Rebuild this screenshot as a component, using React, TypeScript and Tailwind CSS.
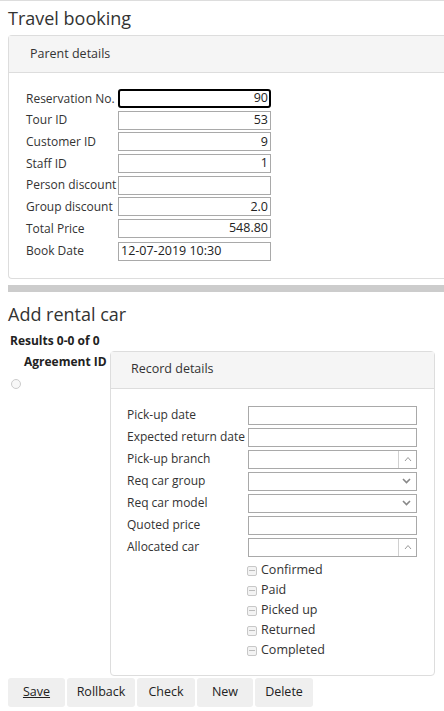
import React from "react";

const font = { fontFamily: '"Open Sans", "Noto Sans", sans-serif' };

function NumInput({ value, focus }: { value: string; focus?: boolean }) {
  return (
    <div
      className={
        focus
          ? "w-[153px] h-[19px] border-2 border-black rounded-[3px] flex items-center justify-end pr-[1px] text-[12.5px] text-[#222]"
          : "w-[153px] h-[19px] border border-[#a9a9a9] flex items-center justify-end pr-[2px] text-[12.5px] text-[#222]"
      }
    >
      {value}
    </div>
  );
}

function Row({ label, children }: { label: string; children: React.ReactNode }) {
  return (
    <div className="flex items-center h-[19px]">
      <div className="w-[92px] text-[12px] text-[#333] whitespace-nowrap">{label}</div>
      {children}
    </div>
  );
}

function Row2({ label, children }: { label: string; children: React.ReactNode }) {
  return (
    <div className="flex items-center h-[19px]">
      <div className="w-[121px] text-[12px] text-[#333] whitespace-nowrap">{label}</div>
      {children}
    </div>
  );
}

function TextBox() {
  return <div className="w-[169px] h-[19px] border border-[#a9a9a9]" />;
}

function LookupBox() {
  return (
    <div className="w-[169px] h-[19px] border border-[#a9a9a9] flex">
      <div className="flex-1" />
      <div className="w-[18px] border-l border-[#d0d0d0] flex items-center justify-center">
        <svg width="8" height="6" viewBox="0 0 8 6">
          <path d="M1 5 L4 1.5 L7 5" fill="none" stroke="#999" strokeWidth="1" />
        </svg>
      </div>
    </div>
  );
}

function SelectBox() {
  return (
    <div className="w-[169px] h-[19px] border border-[#a9a9a9] flex items-center justify-end pr-[5px]">
      <svg width="9" height="6" viewBox="0 0 9 6">
        <path d="M1 1 L4.5 4.5 L8 1" fill="none" stroke="#888" strokeWidth="1.6" />
      </svg>
    </div>
  );
}

function Check({ label }: { label: string }) {
  return (
    <div className="flex items-center h-[20px]">
      <div className="w-[10px] h-[10px] border border-[#c8c8c8] rounded-[2px] bg-[#f3f3f3] flex items-center justify-center mr-[4px]">
        <div className="w-[6px] h-[1px] bg-[#bbb]" />
      </div>
      <span className="text-[12.5px] text-[#333]">{label}</span>
    </div>
  );
}

export default function App() {
  return (
    <div className="w-[444px] h-[711px] overflow-hidden bg-white border-t border-[#ddd] pl-2" style={font}>
      <div className="text-[18px] leading-[34px] text-[#333]">Travel booking</div>
      <div className="border border-r-0 border-[#ddd] rounded-l-[4px]">
        <div className="h-[37px] bg-[#f5f5f5] border-b border-[#ddd] flex items-center pl-[21px] text-[12.5px] text-[#333]">
          Parent details
        </div>
        <div className="pt-[16px] pb-[15px] pl-[17px] flex flex-col gap-[2.7px]">
          <Row label="Reservation No.">
            <NumInput value="90" focus />
          </Row>
          <Row label="Tour ID">
            <NumInput value="53" />
          </Row>
          <Row label="Customer ID">
            <NumInput value="9" />
          </Row>
          <Row label="Staff ID">
            <NumInput value="1" />
          </Row>
          <Row label="Person discount">
            <NumInput value="" />
          </Row>
          <Row label="Group discount">
            <NumInput value="2.0" />
          </Row>
          <Row label="Total Price">
            <NumInput value="548.80" />
          </Row>
          <div className="flex items-start h-[22px] pt-[1px]">
            <div className="w-[92px] text-[12px] text-[#333]">Book Date</div>
            <div className="w-[153px] h-[19px] border border-[#a9a9a9] flex items-center pl-[2px] text-[12.5px] text-[#222]">
              12-07-2019 10:30
            </div>
          </div>
        </div>
      </div>
      <div className="mt-[6px] h-[7px] bg-[#ccc]" />
      <div className="mt-[5px] text-[18px] leading-[34px] text-[#333]">Add rental car</div>
      <div className="pl-[2px] text-[12px] font-bold leading-[20px] text-[#222]">Results 0-0 of 0</div>
      <div className="flex">
        <div className="w-[102px]">
          <div className="h-[22px] flex items-center pl-[16px] text-[12px] font-bold text-[#222] whitespace-nowrap">
            Agreement ID
          </div>
          <div className="ml-[3px] mt-[6px] w-[10px] h-[10px] rounded-full border border-[#ccc] bg-[#f8f8f8]" />
        </div>
        <div className="w-[325px] border border-[#ddd] rounded-[4px]">
          <div className="h-[37px] bg-[#f5f5f5] border-b border-[#ddd] flex items-center pl-[20px] text-[12.5px] text-[#333]">
            Record details
          </div>
          <div className="pt-[17px] pb-[14px] pl-[16px]">
            <div className="flex flex-col gap-[3px]">
              <Row2 label="Pick-up date">
                <TextBox />
              </Row2>
              <Row2 label="Expected return date">
                <TextBox />
              </Row2>
              <Row2 label="Pick-up branch">
                <LookupBox />
              </Row2>
              <Row2 label="Req car group">
                <SelectBox />
              </Row2>
              <Row2 label="Req car model">
                <SelectBox />
              </Row2>
              <Row2 label="Quoted price">
                <TextBox />
              </Row2>
              <Row2 label="Allocated car">
                <LookupBox />
              </Row2>
            </div>
            <div className="pl-[120px] pt-[4px] flex flex-col">
              <Check label="Confirmed" />
              <Check label="Paid" />
              <Check label="Picked up" />
              <Check label="Returned" />
              <Check label="Completed" />
            </div>
          </div>
        </div>
      </div>
      <div className="mt-[2px] flex gap-[2px]">
        <div className="w-[57px] h-[29px] bg-[#efefef] rounded-[3px] flex items-center justify-center text-[12.5px] text-[#222] underline">
          Save
        </div>
        <div className="w-[68px] h-[29px] bg-[#efefef] rounded-[3px] flex items-center justify-center text-[12.5px] text-[#222]">
          Rollback
        </div>
        <div className="w-[58px] h-[29px] bg-[#efefef] rounded-[3px] flex items-center justify-center text-[12.5px] text-[#222]">
          Check
        </div>
        <div className="w-[56px] h-[29px] bg-[#efefef] rounded-[3px] flex items-center justify-center text-[12.5px] text-[#222]">
          New
        </div>
        <div className="w-[58px] h-[29px] bg-[#efefef] rounded-[3px] flex items-center justify-center text-[12.5px] text-[#222]">
          Delete
        </div>
      </div>
    </div>
  );
}
